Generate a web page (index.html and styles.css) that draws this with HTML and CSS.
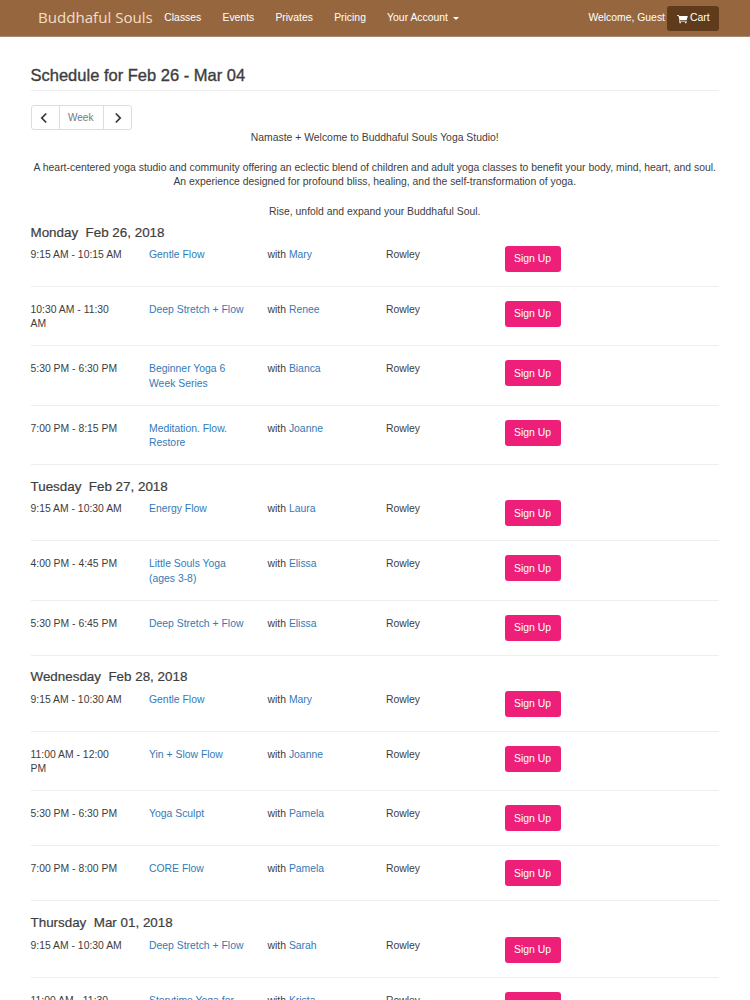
FILE: index.html
```html
<!DOCTYPE html>
<html lang="en">
<head>
<meta charset="utf-8">
<title>Buddhaful Souls</title>
<link rel="stylesheet" href="styles.css">
</head>
<body>
<nav class="navbar">
  <a class="brand" href="#">Buddhaful Souls</a>
  <ul class="nav-links">
    <li><a href="#">Classes</a></li>
    <li><a href="#">Events</a></li>
    <li><a href="#">Privates</a></li>
    <li><a href="#">Pricing</a></li>
    <li><a href="#">Your Account <span class="caret"></span></a></li>
  </ul>
  <span class="welcome">Welcome, Guest</span>
  <a class="cart" href="#">
    <svg class="cart-icon" viewBox="0 0 12 10" aria-hidden="true"><path d="M0 .6h2l.4 1h9.4L10.6 6H3.3l-.2.9h7.5v.8H2.1l.5-1.9L1.5 1.4H0z"/><circle cx="3.4" cy="8.9" r=".9"/><circle cx="9.6" cy="8.9" r=".9"/></svg>
    Cart
  </a>
</nav>
<main class="container">
  <h1 class="page-title">Schedule for Feb 26 - Mar 04</h1>
  <div class="pager">
    <a class="pager-btn" href="#"><svg viewBox="0 0 10 12" aria-hidden="true"><path d="M6.2 1.5 1.8 6 6.2 10.5"/></svg></a>
    <span class="pager-label">Week</span>
    <a class="pager-btn" href="#"><svg viewBox="0 0 10 12" aria-hidden="true"><path d="M2.8 1.5 7.2 6 2.8 10.5"/></svg></a>
  </div>
  <div class="intro">
    <p>Namaste + Welcome to Buddhaful Souls Yoga Studio!</p>
    <p>A heart-centered yoga studio and community offering an eclectic blend of children and adult yoga classes to benefit your body, mind, heart, and soul.<br>An experience designed for profound bliss, healing, and the self-transformation of yoga.</p>
    <p>Rise, unfold and expand your Buddhaful Soul.</p>
  </div>

  <section class="day first">
    <h2>Monday&nbsp; Feb 26, 2018</h2>
    <div class="row"><div class="cell">9:15 AM - 10:15 AM</div><div class="cell"><a href="#">Gentle Flow</a></div><div class="cell">with <a href="#">Mary</a></div><div class="cell">Rowley</div><a class="signup" href="#">Sign Up</a></div>
    <div class="row"><div class="cell">10:30 AM - 11:30 AM</div><div class="cell"><a href="#">Deep Stretch + Flow</a></div><div class="cell">with <a href="#">Renee</a></div><div class="cell">Rowley</div><a class="signup" href="#">Sign Up</a></div>
    <div class="row"><div class="cell">5:30 PM - 6:30 PM</div><div class="cell"><a href="#">Beginner Yoga 6 Week Series</a></div><div class="cell">with <a href="#">Bianca</a></div><div class="cell">Rowley</div><a class="signup" href="#">Sign Up</a></div>
    <div class="row"><div class="cell">7:00 PM - 8:15 PM</div><div class="cell"><a href="#">Meditation. Flow. Restore</a></div><div class="cell">with <a href="#">Joanne</a></div><div class="cell">Rowley</div><a class="signup" href="#">Sign Up</a></div>
  </section>

  <section class="day">
    <h2>Tuesday&nbsp; Feb 27, 2018</h2>
    <div class="row"><div class="cell">9:15 AM - 10:30 AM</div><div class="cell"><a href="#">Energy Flow</a></div><div class="cell">with <a href="#">Laura</a></div><div class="cell">Rowley</div><a class="signup" href="#">Sign Up</a></div>
    <div class="row"><div class="cell">4:00 PM - 4:45 PM</div><div class="cell"><a href="#">Little Souls Yoga (ages 3-8)</a></div><div class="cell">with <a href="#">Elissa</a></div><div class="cell">Rowley</div><a class="signup" href="#">Sign Up</a></div>
    <div class="row"><div class="cell">5:30 PM - 6:45 PM</div><div class="cell"><a href="#">Deep Stretch + Flow</a></div><div class="cell">with <a href="#">Elissa</a></div><div class="cell">Rowley</div><a class="signup" href="#">Sign Up</a></div>
  </section>

  <section class="day">
    <h2>Wednesday&nbsp; Feb 28, 2018</h2>
    <div class="row"><div class="cell">9:15 AM - 10:30 AM</div><div class="cell"><a href="#">Gentle Flow</a></div><div class="cell">with <a href="#">Mary</a></div><div class="cell">Rowley</div><a class="signup" href="#">Sign Up</a></div>
    <div class="row"><div class="cell">11:00 AM - 12:00 PM</div><div class="cell"><a href="#">Yin + Slow Flow</a></div><div class="cell">with <a href="#">Joanne</a></div><div class="cell">Rowley</div><a class="signup" href="#">Sign Up</a></div>
    <div class="row"><div class="cell">5:30 PM - 6:30 PM</div><div class="cell"><a href="#">Yoga Sculpt</a></div><div class="cell">with <a href="#">Pamela</a></div><div class="cell">Rowley</div><a class="signup" href="#">Sign Up</a></div>
    <div class="row"><div class="cell">7:00 PM - 8:00 PM</div><div class="cell"><a href="#">CORE Flow</a></div><div class="cell">with <a href="#">Pamela</a></div><div class="cell">Rowley</div><a class="signup" href="#">Sign Up</a></div>
  </section>

  <section class="day">
    <h2>Thursday&nbsp; Mar 01, 2018</h2>
    <div class="row"><div class="cell">9:15 AM - 10:30 AM</div><div class="cell"><a href="#">Deep Stretch + Flow</a></div><div class="cell">with <a href="#">Sarah</a></div><div class="cell">Rowley</div><a class="signup" href="#">Sign Up</a></div>
    <div class="row"><div class="cell">11:00 AM - 11:30 AM</div><div class="cell"><a href="#">Storytime Yoga for Kids</a></div><div class="cell">with <a href="#">Krista</a></div><div class="cell">Rowley</div><a class="signup" href="#">Sign Up</a></div>
  </section>
</main>
</body>
</html>
```

FILE: styles.css
```css
html, body {
  margin: 0;
  height: 1000px;
  overflow: hidden;
}
body {
  font-family: "Liberation Sans", Arial, sans-serif;
  font-size: 10.4px;
  line-height: 14.5px;
  color: #3d3d3d;
  background: #fff;
}
a {
  color: #337ab7;
  text-decoration: none;
}

.navbar {
  display: flex;
  align-items: center;
  height: 36px;
  padding: 0 31px 0 38px;
  background: #96673f;
  border-bottom: 1px solid #a98a6e;
}
.brand {
  font-family: "Open Sans", sans-serif;
  font-size: 15.1px;
  color: #f1dfc6;
  margin: 0 11.5px 2px 0;
}
.nav-links {
  display: flex;
  gap: 21.2px;
  list-style: none;
  margin: 1px 0 0;
  padding: 0;
}
.nav-links a {
  color: #fff;
}
.caret {
  display: inline-block;
  margin-left: 2px;
  vertical-align: middle;
  border-top: 3px solid #fff;
  border-left: 3px solid transparent;
  border-right: 3px solid transparent;
}
.welcome {
  margin: 1px 2px 0 auto;
  color: #fff;
}
.cart {
  display: flex;
  align-items: center;
  gap: 2px;
  width: 52px;
  height: 25px;
  padding: 1px 0 0 10px;
  box-sizing: border-box;
  border-radius: 3px;
  background: #5f3b1b;
  color: #fff;
}
.cart-icon {
  width: 11px;
  height: 10px;
  fill: #fff;
}

.container {
  padding: 0 31px 0 30.5px;
}
.page-title {
  margin: 29px 0 14px;
  padding-bottom: 5px;
  border-bottom: 1px solid #eee;
  font-size: 16.5px;
  font-weight: 400;
  line-height: 19px;
  color: #3d3d3d;
  -webkit-text-stroke: 0.35px #3d3d3d;
}
.pager {
  display: inline-flex;
  height: 25px;
  border: 1px solid #ddd;
  border-radius: 3px;
  box-sizing: border-box;
}
.pager-btn {
  display: flex;
  align-items: center;
  justify-content: center;
  width: 27.5px;
}
.pager-label + .pager-btn {
  width: 26.5px;
}
.pager-btn svg {
  width: 10px;
  height: 12px;
  fill: none;
  stroke: #333;
  stroke-width: 1.7;
}
.pager-label {
  display: flex;
  align-items: center;
  padding: 1px 10px 0 8px;
  border-left: 1px solid #ddd;
  border-right: 1px solid #ddd;
  font-size: 10px;
  color: #777;
}
.intro {
  text-align: center;
  margin-top: 1px;
}
.intro p {
  margin: 0 0 15px;
}

.day h2 {
  margin: 0;
  font-size: 13.4px;
  font-weight: 400;
  line-height: 15px;
  color: #3d3d3d;
  -webkit-text-stroke: 0.2px #3d3d3d;
}
.day {
  margin-top: 13.6px;
}
.day.first {
  margin-top: -9px;
}
.day h2 + .row {
  border-top: 0;
  padding-top: 6.5px;
}
.day.first h2 + .row {
  padding-top: 5.8px;
}
.row {
  display: grid;
  grid-template-columns: repeat(4, 118.5px) auto;
  justify-content: start;
  align-items: start;
  padding: 14px 0;
  border-top: 1px solid #eee;
}
.row:last-child {
  border-bottom: 1px solid #eee;
}
.cell {
  padding: 2px 23.5px 0 0;
  margin-bottom: -0.5px;
}
.signup {
  display: flex;
  align-items: center;
  justify-content: center;
  width: 56px;
  height: 26px;
  padding-top: 1px;
  box-sizing: border-box;
  border-radius: 3px;
  background: #ed1f78;
  color: #fff;
}
```
